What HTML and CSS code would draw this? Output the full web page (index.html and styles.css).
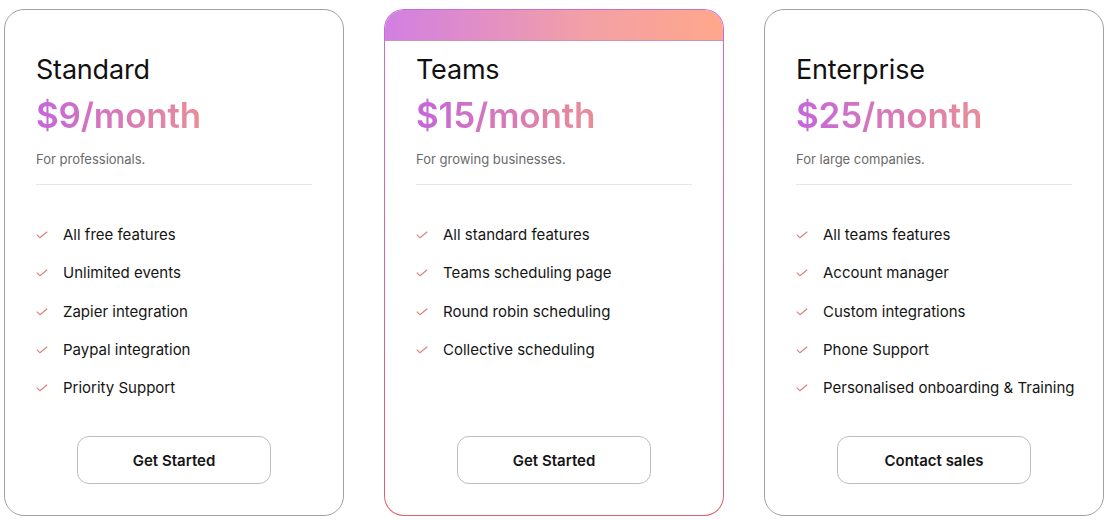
FILE: index.html
```html
<!DOCTYPE html>
<html>
<head>
<meta charset="utf-8">
<link rel="stylesheet" href="styles.css">
</head>
<body>
<div class="plans">
  <div class="card">
    <h2 class="title">Standard</h2>
    <div class="price">$9/month</div>
    <p class="sub">For professionals.</p>
    <hr class="divider">
    <ul class="features">
      <li><svg class="check" viewBox="0 0 12 8"><polyline points="0.8,3.6 4,6.8 11.2,0.8"/></svg>All free features</li>
      <li><svg class="check" viewBox="0 0 12 8"><polyline points="0.8,3.6 4,6.8 11.2,0.8"/></svg>Unlimited events</li>
      <li><svg class="check" viewBox="0 0 12 8"><polyline points="0.8,3.6 4,6.8 11.2,0.8"/></svg>Zapier integration</li>
      <li><svg class="check" viewBox="0 0 12 8"><polyline points="0.8,3.6 4,6.8 11.2,0.8"/></svg>Paypal integration</li>
      <li><svg class="check" viewBox="0 0 12 8"><polyline points="0.8,3.6 4,6.8 11.2,0.8"/></svg>Priority Support</li>
    </ul>
    <button class="btn">Get Started</button>
  </div>
  <div class="card featured">
    <div class="bar"></div>
    <h2 class="title">Teams</h2>
    <div class="price">$15/month</div>
    <p class="sub">For growing businesses.</p>
    <hr class="divider">
    <ul class="features">
      <li><svg class="check" viewBox="0 0 12 8"><polyline points="0.8,3.6 4,6.8 11.2,0.8"/></svg>All standard features</li>
      <li><svg class="check" viewBox="0 0 12 8"><polyline points="0.8,3.6 4,6.8 11.2,0.8"/></svg>Teams scheduling page</li>
      <li><svg class="check" viewBox="0 0 12 8"><polyline points="0.8,3.6 4,6.8 11.2,0.8"/></svg>Round robin scheduling</li>
      <li><svg class="check" viewBox="0 0 12 8"><polyline points="0.8,3.6 4,6.8 11.2,0.8"/></svg>Collective scheduling</li>
    </ul>
    <button class="btn">Get Started</button>
  </div>
  <div class="card">
    <h2 class="title">Enterprise</h2>
    <div class="price">$25/month</div>
    <p class="sub">For large companies.</p>
    <hr class="divider">
    <ul class="features">
      <li><svg class="check" viewBox="0 0 12 8"><polyline points="0.8,3.6 4,6.8 11.2,0.8"/></svg>All teams features</li>
      <li><svg class="check" viewBox="0 0 12 8"><polyline points="0.8,3.6 4,6.8 11.2,0.8"/></svg>Account manager</li>
      <li><svg class="check" viewBox="0 0 12 8"><polyline points="0.8,3.6 4,6.8 11.2,0.8"/></svg>Custom integrations</li>
      <li><svg class="check" viewBox="0 0 12 8"><polyline points="0.8,3.6 4,6.8 11.2,0.8"/></svg>Phone Support</li>
      <li><svg class="check" viewBox="0 0 12 8"><polyline points="0.8,3.6 4,6.8 11.2,0.8"/></svg>Personalised onboarding &amp; Training</li>
    </ul>
    <button class="btn">Contact sales</button>
  </div>
</div>
</body>
</html>
```

FILE: styles.css
```css
* { box-sizing: border-box; }
html, body { margin: 0; padding: 0; background: #fff; }
body {
  font-family: Inter, "Noto Sans", sans-serif;
  color: #111;
}
.plans {
  display: flex;
  gap: 40px;
  padding: 9px 4px 4px;
  align-items: stretch;
}
.card {
  position: relative;
  width: 340px;
  flex: 0 0 340px;
  height: 507px;
  border: 1.5px solid #a0a0a6;
  border-radius: 20px;
  padding: 42px 31px 31px;
  display: flex;
  flex-direction: column;
  background: #fff;
  overflow: hidden;
}
.featured {
  border: 1.5px solid transparent;
  background:
    linear-gradient(#fff, #fff) padding-box,
    linear-gradient(to bottom, #c66ed8, #e0606a) border-box;
}
.bar {
  position: absolute;
  left: 0; right: 0; top: 0;
  height: 31px;
  background: linear-gradient(to right, #d17fe2, #f3a0a6 60%, #ffa78a);
  border-bottom: 1px solid #d88fb0;
}
.title {
  margin: 0;
  font-size: 27px;
  font-weight: 400;
  line-height: 36px;
  letter-spacing: -0.2px;
}
.price {
  align-self: flex-start;
  margin-top: 6px;
  font-size: 35px;
  font-weight: 600;
  line-height: 42px;
  letter-spacing: -0.2px;
  background: linear-gradient(to right, #c466d9, #ea8d97);
  -webkit-background-clip: text;
  background-clip: text;
  color: transparent;
}
.sub {
  margin: 14px 0 0;
  font-size: 13px;
  line-height: 18px;
  color: #6a6a6a;
}
.divider {
  margin: 16px 0 0;
  border: 0;
  border-top: 1px solid #e6e6e6;
}
.features {
  list-style: none;
  margin: 40px 0 0;
  padding: 0;
  display: flex;
  flex-direction: column;
  gap: 18.3px;
}
.features li {
  display: flex;
  align-items: center;
  font-size: 15px;
  line-height: 20px;
  color: #151515;
  white-space: nowrap;
}
.check {
  width: 12px;
  height: 8px;
  margin-right: 15px;
  flex: 0 0 12px;
  fill: none;
  stroke: #d8807b;
  stroke-width: 1.2;
}
.btn {
  margin-top: auto;
  align-self: center;
  width: 194px;
  height: 48px;
  border: 1px solid #bdbdbd;
  border-radius: 12px;
  background: #fff;
  font-family: inherit;
  font-size: 15px;
  font-weight: 600;
  color: #151515;
}
```
